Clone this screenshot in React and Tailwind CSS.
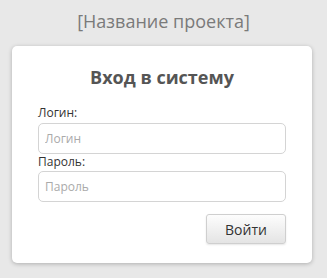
export default function App() {
  return (
    <div className="w-[327px] h-[278px] bg-[#e8e8e8] flex flex-col pt-[8px]" style={{ fontFamily: '"Open Sans", "DejaVu Sans", sans-serif' }}>
      <div className="text-center text-[18px] leading-[26px] text-[#7a7a7a]">[Название проекта]</div>
      <div className="mt-[12px] ml-[12px] w-[300px] h-[217px] bg-white rounded-[5px] shadow-[0_1px_4px_rgba(0,0,0,0.25)] flex flex-col px-[26px]">
        <div className="mt-[19px] text-center text-[18px] leading-[24px] font-bold text-[#555]">Вход в систему</div>
        <label className="mt-[16px] text-[12px] leading-[16px] text-[#333]">Логин:</label>
        <input placeholder="Логин" className="mt-[2px] h-[31px] w-full border border-[#d4d4d4] rounded-[5px] px-[6px] text-[12px] text-[#333] placeholder:text-[#aaa] outline-none" />
        <label className="mt-[0px] text-[12px] leading-[16px] text-[#333]">Пароль:</label>
        <input placeholder="Пароль" className="mt-[1px] h-[31px] w-full border border-[#d4d4d4] rounded-[5px] px-[6px] text-[12px] text-[#333] placeholder:text-[#aaa] outline-none" />
        <div className="mt-[12px] flex justify-end">
          <button className="w-[80px] h-[30px] rounded-[3px] border border-[#cfcfcf] bg-gradient-to-b from-[#fdfdfd] to-[#e4e4e4] text-[14px] text-[#333] shadow-[0_1px_2px_rgba(0,0,0,0.1)]">Войти</button>
        </div>
      </div>
    </div>
  );
}
